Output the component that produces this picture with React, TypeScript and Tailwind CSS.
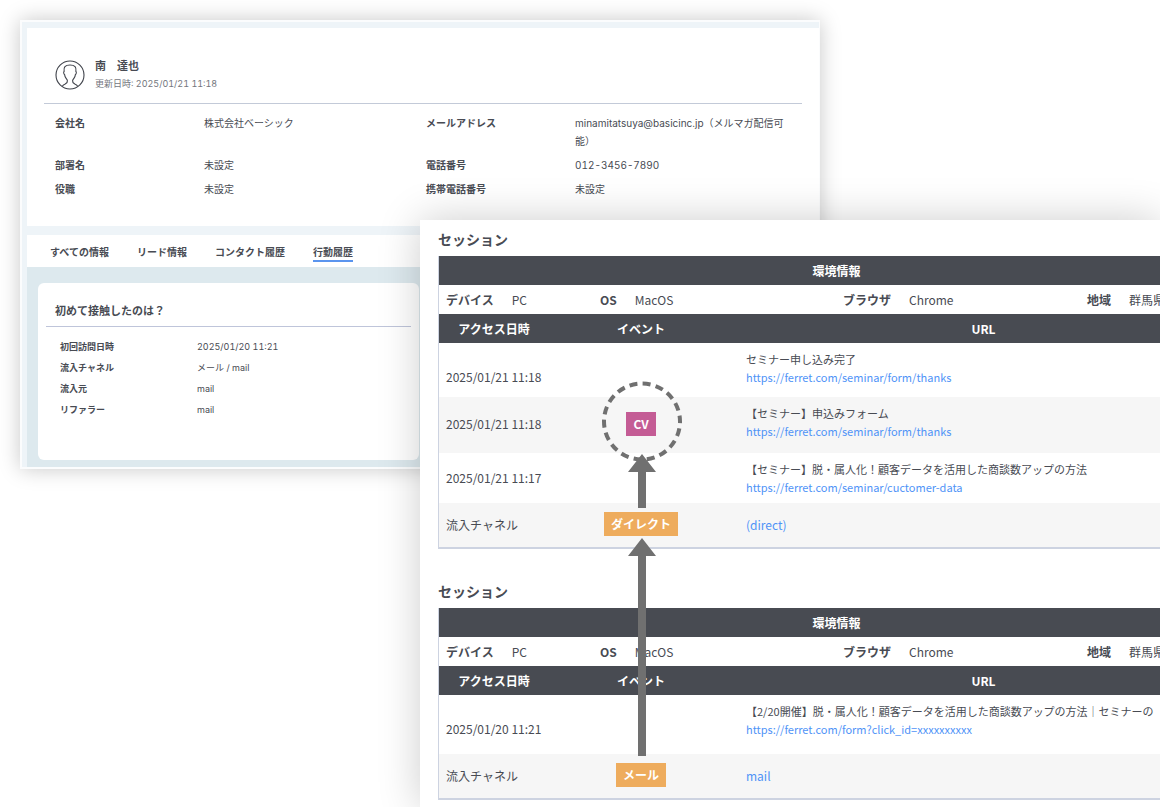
import type { ReactNode } from "react";

interface Field {
  label: string;
  value: string;
}

interface SessionRow {
  date: string;
  title?: string;
  link: string;
  badge?: string;
  badgeColor?: string;
  rowClass: string;
  dateClass?: string;
}

const CONTACT_FIELDS: Field[] = [
  { label: "会社名", value: "株式会社ベーシック" },
  { label: "メールアドレス", value: "minamitatsuya@basicinc.jp（メルマガ配信可能）" },
  { label: "部署名", value: "未設定" },
  { label: "電話番号", value: "012-3456-7890" },
  { label: "役職", value: "未設定" },
  { label: "携帯電話番号", value: "未設定" },
];

const TABS = ["すべての情報", "リード情報", "コンタクト履歴", "行動履歴"];

const FIRST_TOUCH: Field[] = [
  { label: "初回訪問日時", value: "2025/01/20 11:21" },
  { label: "流入チャネル", value: "メール / mail" },
  { label: "流入元", value: "mail" },
  { label: "リファラー", value: "mail" },
];

const ENVIRONMENT: Field[] = [
  { label: "デバイス", value: "PC" },
  { label: "OS", value: "MacOS" },
  { label: "ブラウザ", value: "Chrome" },
  { label: "地域", value: "群馬県" },
];

const LATEST_SESSION: SessionRow[] = [
  {
    date: "2025/01/21 11:18",
    title: "セミナー申し込み完了",
    link: "https://ferret.com/seminar/form/thanks",
    rowClass: "h-[54px]",
    dateClass: "pt-3.5",
  },
  {
    date: "2025/01/21 11:18",
    title: "【セミナー】申込みフォーム",
    link: "https://ferret.com/seminar/form/thanks",
    badge: "CV",
    badgeColor: "bg-[#c45c95]",
    rowClass: "h-14 bg-[#f6f6f6]",
    dateClass: "pb-0.5",
  },
  {
    date: "2025/01/21 11:17",
    title: "【セミナー】脱・属人化！顧客データを活用した商談数アップの方法",
    link: "https://ferret.com/seminar/cuctomer-data",
    rowClass: "h-[50px]",
  },
  {
    date: "流入チャネル",
    link: "(direct)",
    badge: "ダイレクト",
    badgeColor: "bg-[#eeac5d]",
    rowClass: "h-11 bg-[#f6f6f6]",
  },
];

const FIRST_SESSION: SessionRow[] = [
  {
    date: "2025/01/20 11:21",
    title: "【2/20開催】脱・属人化！顧客データを活用した商談数アップの方法｜セミナーの",
    link: "https://ferret.com/form?click_id=xxxxxxxxxx",
    rowClass: "h-[59px]",
    dateClass: "pt-2",
  },
  {
    date: "流入チャネル",
    link: "mail",
    badge: "メール",
    badgeColor: "bg-[#eeac5d]",
    rowClass: "h-11 bg-[#f6f6f6]",
  },
];

function Avatar() {
  return (
    <svg viewBox="0 0 30 30" className="h-[30px] w-[30px] shrink-0" fill="none" stroke="#3f424a" strokeWidth="1.1">
      <circle cx="15" cy="15" r="14" />
      <path d="M7.200 26.400c.6-1.100 1.700-1.700 3-2.300 1.600-.8 2.400-1.700 2.200-3.300-.1-1.200-.9-1.900-1.600-2.900-.7-1-1-2-1.200-3.200-.9-.6-1.300-2.900-.5-3.300-.7-4.200 1-6.400 5.900-6.400s6.600 2.200 5.900 6.400c.8.4.4 2.700-.5 3.300-.2 1.200-.5 2.200-1.200 3.200-.7 1-1.500 1.700-1.600 2.900-.2 1.600.6 2.500 2.200 3.300 1.300.6 2.400 1.200 3 2.300" />
    </svg>
  );
}

function ContactWindow() {
  return (
    <section className="w-full max-w-[800px] border-2 border-[#fbfcfd] border-r-[1px] bg-[#eef4f8] pt-1.5 pl-[5px] font-['Inter','Noto_Sans_CJK_JP',sans-serif] tabular-nums shadow-[0_0_20px_rgba(0,0,0,0.22)]">
      <div className="h-[198px] bg-white px-[17px]">
        <header className="flex h-[76px] items-center gap-2.5 border-b border-[#c3cad8] px-[11px] pt-[18px]">
          <Avatar />
          <div>
            <h1 className="text-[11px] leading-[18px] font-bold">南　達也</h1>
            <p className="text-[9px] leading-[18px] text-[#73767d]">更新日時: 2025/01/21 11:18</p>
          </div>
        </header>
        <dl className="grid grid-cols-2 gap-x-1.5 gap-y-1.5 px-[11px] pt-2.5 text-[10px] leading-[18px]">
          {CONTACT_FIELDS.map((f) => (
            <div key={f.label} className="flex">
              <dt className="w-[149px] shrink-0 font-bold">{f.label}</dt>
              <dd>{f.value}</dd>
            </div>
          ))}
        </dl>
      </div>

      <nav className="mt-[9px] flex h-8 items-start gap-7 bg-white px-[23px] pt-2.5 text-[10px] leading-[15px] font-bold" role="tablist">
        {TABS.map((tab) => (
          <button
            key={tab}
            type="button"
            role="tab"
            aria-selected={tab === "行動履歴"}
            className="border-b-2 border-transparent whitespace-nowrap aria-selected:border-[#5a94ee]"
          >
            {tab}
          </button>
        ))}
      </nav>

      <div className="bg-[#dde9ee] px-[11px] pt-4 pb-[7px]">
        <div className="h-[177px] max-w-[381px] rounded-md bg-white px-2 pt-[18px]">
          <h2 className="border-b border-[#bfc5da] px-[9px] pb-1 text-[11px] leading-[21px] font-bold">
            初めて接触したのは？
          </h2>
          <dl className="px-3.5 pt-[9px] text-[9px] leading-[21px]">
            {FIRST_TOUCH.map((f) => (
              <div key={f.label} className="flex">
                <dt className="w-[137px] font-bold">{f.label}</dt>
                <dd>{f.value}</dd>
              </div>
            ))}
          </dl>
        </div>
      </div>
    </section>
  );
}

function Badge({ color, children }: { color?: string; children: ReactNode }) {
  return (
    <span className={`inline-block px-[7px] align-middle text-[12px] leading-6 font-bold text-white ${color}`}>
      {children}
    </span>
  );
}

function SessionTable({ rows }: { rows: SessionRow[] }) {
  return (
    <section>
      <h2 className="mb-[7px] text-[14px] leading-5 font-bold">セッション</h2>
      <table className="w-full min-w-[796px] table-fixed border-separate border-spacing-0 border-b-2 border-l border-[#cdd3e1] text-[12px] leading-[18px]">
        <colgroup>
          <col className="w-[110px]" />
          <col className="w-[184px]" />
          <col />
        </colgroup>
        <thead>
          <tr className="h-[29px] bg-[#484b52] text-white">
            <th colSpan={3}>環境情報</th>
          </tr>
          <tr className="h-[29px]">
            <td colSpan={3}>
              <dl className="grid grid-cols-[154px_243px_244px_1fr] pl-[7px]">
                {ENVIRONMENT.map((f) => (
                  <div key={f.label} className="flex gap-[18px]">
                    <dt className="font-bold">{f.label}</dt>
                    <dd>{f.value}</dd>
                  </div>
                ))}
              </dl>
            </td>
          </tr>
          <tr className="h-[29px] bg-[#484b52] text-white">
            <th>アクセス日時</th>
            <th>イベント</th>
            <th>URL</th>
          </tr>
        </thead>
        <tbody>
          {rows.map((row, i) => (
            <tr key={i} className={row.rowClass}>
              <td className={`pl-[7px] whitespace-nowrap ${row.dateClass ?? ""}`}>{row.date}</td>
              <td className="pb-0.5 text-center">{row.badge && <Badge color={row.badgeColor}>{row.badge}</Badge>}</td>
              <td className={row.title ? "pt-[7px] pl-[13px] align-top text-[11px] whitespace-nowrap" : "pl-[13px]"}>
                {row.title && <p>{row.title}</p>}
                <a href="#" className="block text-[#4f93f7]">
                  {row.link}
                </a>
              </td>
            </tr>
          ))}
        </tbody>
      </table>
    </section>
  );
}

// Arrows that trace the visitor's path from the mail click up to the conversion
function JourneyArrows() {
  return (
    <svg
      viewBox="0 0 84 380"
      className="pointer-events-none absolute top-40 left-[180px] h-[380px] w-[84px]"
      fill="#707070"
      aria-hidden="true"
    >
      <circle
        cx="42"
        cy="41.5"
        r="38"
        fill="none"
        stroke="#707070"
        strokeWidth="4"
        strokeDasharray="8 5.264"
        strokeDashoffset="6.3"
      />
      <path d="M42 74l14 18H46v36h-8V92H28z" />
      <path d="M42 158l14 18H46v200h-8V176H28z" />
    </svg>
  );
}

export default function App() {
  return (
    <main className="min-h-screen overflow-hidden bg-white pt-5 pl-5 text-[#484b53]">
      <ContactWindow />
      <div className="relative -mt-[249px] ml-[400px] bg-white font-['Noto_Sans_CJK_JP',sans-serif] shadow-[0_0_40px_rgba(0,0,0,0.2)]">
        <div className="flex flex-col gap-8 overflow-hidden pt-[9px] pb-2 pl-[18px]">
          <SessionTable rows={LATEST_SESSION} />
          <SessionTable rows={FIRST_SESSION} />
        </div>
        <JourneyArrows />
      </div>
    </main>
  );
}
